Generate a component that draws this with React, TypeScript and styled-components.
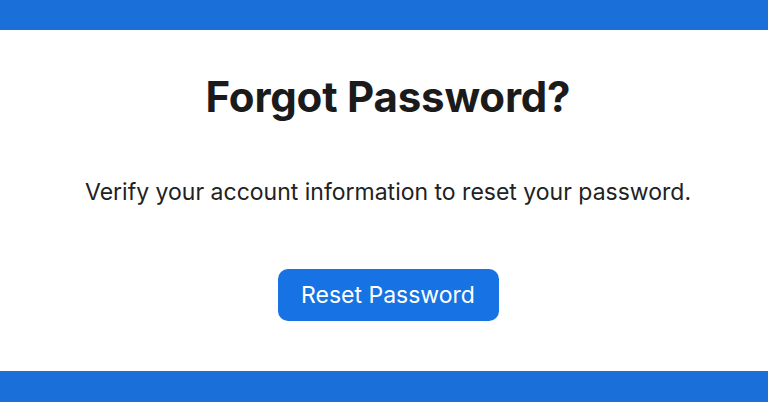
import styled, {createGlobalStyle} from 'styled-components';

const GlobalStyle = createGlobalStyle`
  html, body {
    margin: 0;
    padding: 0;
    background: #ffffff;
  }
  body {
    font-family: Inter, "Noto Sans", "Liberation Sans", sans-serif;
  }
`;

const Page = styled.div`
  width: 768px;
  height: 402px;
  display: flex;
  flex-direction: column;
  overflow: hidden;
`;

const Band = styled.div<{$height: number}>`
  height: ${(p) => p.$height}px;
  flex-shrink: 0;
  background: #1a6fd8;
`;

const Content = styled.main`
  flex: 1;
  display: flex;
  flex-direction: column;
  align-items: center;
  padding-left: 8px;
  color: #1b1b1b;
`;

const Title = styled.h1`
  margin: 43px 0 0;
  font-size: 42px;
  line-height: 48px;
  font-weight: 700;
  letter-spacing: -0.2px;
`;

const Subtitle = styled.p`
  margin: 57px 0 0;
  font-size: 23px;
  line-height: 28px;
  font-weight: 400;
  color: #222;
`;

const ResetButton = styled.button`
  margin-top: 63px;
  width: 221px;
  height: 52px;
  border: none;
  border-radius: 10px;
  background: #1772e3;
  color: #ffffff;
  font-family: inherit;
  font-size: 23px;
  font-weight: 400;
  cursor: pointer;
`;

export default function App() {
  return (
    <>
      <GlobalStyle />
      <Page>
        <Band $height={30} />
        <Content>
          <Title>Forgot Password?</Title>
          <Subtitle>
            Verify your account information to reset your password.
          </Subtitle>
          <ResetButton type="button">Reset Password</ResetButton>
        </Content>
        <Band $height={31} />
      </Page>
    </>
  );
}
